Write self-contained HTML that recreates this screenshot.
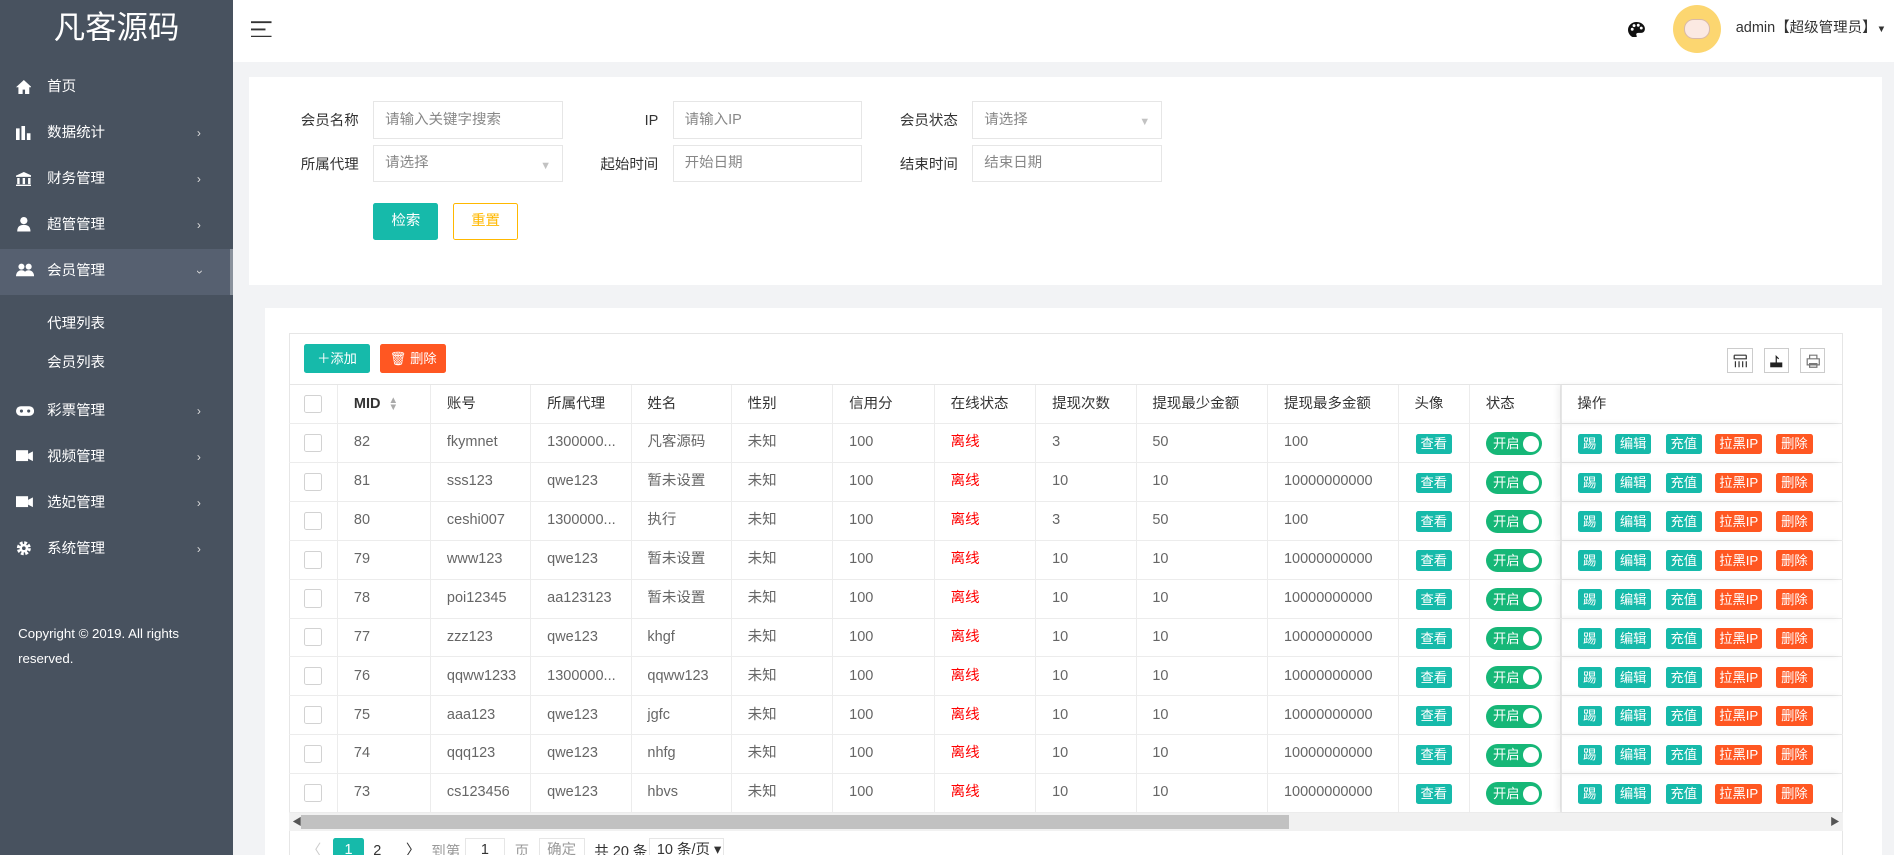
<!DOCTYPE html>
<html><head><meta charset="utf-8"><style>
html{zoom:1.20791;overflow:hidden}
*{box-sizing:border-box;margin:0;padding:0}
body{width:1568px;height:708px;overflow:hidden;background:#f2f3f5;font-family:"Liberation Sans","Noto Sans CJK SC",sans-serif;font-size:12px;color:#666;position:relative;line-height:16px}
.a{position:absolute}
#side{left:0;top:0;width:193px;height:708px;background:#48525f;color:#fff}
.logo{left:0;width:193px;top:4px;text-align:center;font-size:26px;color:#fff;line-height:38px}
.mi{left:0;width:190px;height:38px;line-height:38px;font-size:12px;color:#fff}
.mi .t{position:absolute;left:39px}
.mi .ar{position:absolute;left:163px;font-size:10px;color:#ddd}
.mi .ic{position:absolute;left:13px;top:12px;width:13px;height:12px}
.sub{left:39px;font-size:12px;color:#fff}
#top{left:193px;top:0;width:1375px;height:51px;background:#fff}
.card{background:#fff}
.lab{font-size:12px;color:#333;text-align:right;width:80px}
.inp{height:31px;border:1px solid #e6e6e6;background:#fff;color:#888;padding-left:9px;display:flex;align-items:center;font-size:12px;width:157px}
.row{position:absolute;left:239px;width:1287px;height:32.3px;border-bottom:1px solid #ececec}
.c{position:absolute;top:0;height:100%;display:flex;align-items:center;padding-left:13px;border-right:1px solid #ececec;white-space:nowrap;overflow:hidden;line-height:16px}
.c span,.c b{line-height:16px}
.btn{display:flex;align-items:center;justify-content:center;height:17px;color:#fff;font-size:11px;border-radius:2px;position:absolute}
.g{background:#16baaa}.o{background:#ff5722}
.sw{position:absolute;left:1230px;width:47px;height:19px;border-radius:10px;background:#16b777;color:#fff;font-size:11px;display:flex;align-items:center;padding-left:6px}
.sw::after{content:"";position:absolute;right:3px;top:3px;width:13px;height:13px;border-radius:50%;background:#fff}
.cb{width:15px;height:15px;border:1px solid #d2d2d2;background:#fff;border-radius:2px}
.ctr{display:flex;align-items:center;justify-content:center}
</style></head><body>
<div id="side" class="a">
<div class="a logo">凡客源码</div>
<div class="a mi" style="top:54px"><svg class="ic" viewBox="0 0 13 12"><path d="M6.5 0L0 6h2v6h3.5V8h2v4H11V6h2z" fill="#fff"/></svg><span class="t">首页</span></div>
<div class="a mi" style="top:92px"><svg class="ic" viewBox="0 0 13 12"><path d="M0 2h3v10H0zM4.5 0h3v12h-3zM9 6h3v6H9z" fill="#fff"/></svg><span class="t">数据统计</span><span class="ar">›</span></div>
<div class="a mi" style="top:130px"><svg class="ic" viewBox="0 0 13 12"><path d="M6.5 0L0 3v1h13V3zM1 5h2v5H1zM5.5 5h2v5h-2zM10 5h2v5h-2zM0 10.5h13V12H0z" fill="#fff"/></svg><span class="t">财务管理</span><span class="ar">›</span></div>
<div class="a mi" style="top:168px"><svg class="ic" viewBox="0 0 13 12"><circle cx="6.5" cy="3" r="3" fill="#fff"/><path d="M1 12c0-4 2-5.5 5.5-5.5S12 8 12 12z" fill="#fff"/></svg><span class="t">超管管理</span><span class="ar">›</span></div>
<div class="a mi" style="top:206px;background:#566070;width:193px;border-right:3px solid #8a929c"><svg class="ic" viewBox="0 0 15 12" style="width:15px"><circle cx="4.5" cy="3" r="2.5" fill="#fff"/><circle cx="10.5" cy="3" r="2.5" fill="#fff"/><path d="M0 11c0-3 2-5 4.5-5s4.5 2 4.5 5zM6 11c0-3 2-5 4.5-5S15 8 15 11z" fill="#fff"/></svg><span class="t">会员管理</span><span class="ar" style="transform:rotate(90deg)">›</span></div>
<div class="a sub" style="top:261px">代理列表</div>
<div class="a sub" style="top:293px">会员列表</div>
<div class="a mi" style="top:322px"><svg class="ic" viewBox="0 0 15 10" style="width:15px;top:13px"><rect width="15" height="8" rx="4" fill="#fff"/><circle cx="4.5" cy="4" r="1.3" fill="#48525f"/><circle cx="10.5" cy="4" r="1.3" fill="#48525f"/></svg><span class="t">彩票管理</span><span class="ar">›</span></div>
<div class="a mi" style="top:360px"><svg class="ic" viewBox="0 0 14 10" style="width:14px"><rect width="10" height="9" fill="#fff"/><path d="M10 3l4-2v8l-4-2z" fill="#fff"/></svg><span class="t">视频管理</span><span class="ar">›</span></div>
<div class="a mi" style="top:398px"><svg class="ic" viewBox="0 0 14 10" style="width:14px"><rect width="10" height="9" fill="#fff"/><path d="M10 3l4-2v8l-4-2z" fill="#fff"/></svg><span class="t">选妃管理</span><span class="ar">›</span></div>
<div class="a mi" style="top:436px"><svg class="ic" viewBox="0 0 12 12"><circle cx="6" cy="6" r="4.3" fill="none" stroke="#fff" stroke-width="3" stroke-dasharray="2.2 1.2"/><circle cx="6" cy="6" r="3.5" fill="#fff"/><circle cx="6" cy="6" r="1.5" fill="#48525f"/></svg><span class="t">系统管理</span><span class="ar">›</span></div>
<div class="a" style="left:15px;top:514px;width:170px;font-size:11px;line-height:21px;color:#fff">Copyright © 2019. All rights reserved.</div>
</div>

<div id="top" class="a">
<svg class="a" style="left:15px;top:17px" width="18" height="14" viewBox="0 0 18 14"><path d="M0 1h17M0 7h12M0 13h17" stroke="#333" stroke-width="1.6"/></svg>
<svg class="a" style="left:1155px;top:18px" width="14" height="13" viewBox="0 0 14 13"><path d="M7 0C3 0 0 3 0 6.5S3 13 6 13c1.2 0 1.5-1 1-2s0-2 1.5-2H11c2 0 3-1.5 3-3.5C14 2.5 11 0 7 0z" fill="#111"/><circle cx="3.5" cy="6" r="1.2" fill="#fff"/><circle cx="5" cy="3" r="1.2" fill="#fff"/><circle cx="8.5" cy="2.7" r="1.2" fill="#fff"/><circle cx="11" cy="5" r="1.2" fill="#fff"/></svg>
<div class="a" style="left:1192px;top:4px;width:40px;height:40px;border-radius:50%;background:#fcd670"><div class="a" style="left:9px;top:12px;width:22px;height:16px;background:#fbe9e2;border-radius:8px;border:1px solid #d9b9a8"></div></div>
<div class="a" style="left:1244px;top:16px;font-size:12px;color:#333">admin【超级管理员】<span style="font-size:8px">▼</span></div>
</div>

<div class="a card" style="left:206px;top:64px;width:1352px;height:172px">
<div class="a lab" style="left:11px;top:29px">会员名称</div><div class="a inp" style="left:103px;top:20px">请输入关键字搜索</div>
<div class="a lab" style="left:259px;top:29px">IP</div><div class="a inp" style="left:351px;top:20px">请输入IP</div>
<div class="a lab" style="left:507px;top:29px">会员状态</div><div class="a inp" style="left:599px;top:20px">请选择<span class="a" style="right:9px;top:9px;color:#c2c2c2;font-size:9px">▼</span></div>
<div class="a lab" style="left:11px;top:65px">所属代理</div><div class="a inp" style="left:103px;top:56px">请选择<span class="a" style="right:9px;top:9px;color:#c2c2c2;font-size:9px">▼</span></div>
<div class="a lab" style="left:259px;top:65px">起始时间</div><div class="a inp" style="left:351px;top:56px">开始日期</div>
<div class="a lab" style="left:507px;top:65px">结束时间</div><div class="a inp" style="left:599px;top:56px">结束日期</div>
<div class="a ctr" style="left:103px;top:104px;width:54px;height:31px;background:#16baaa;color:#fff;border-radius:2px">检索</div>
<div class="a ctr" style="left:169px;top:104px;width:54px;height:31px;border:1px solid #ffb800;color:#ffb800;border-radius:2px">重置</div>
</div>

<div class="a card" style="left:219px;top:255px;width:1339px;height:460px"></div>
<div class="a" style="left:239px;top:276px;width:1287px;height:440px;border:1px solid #e6e6e6;background:#fff"></div>
<div class="a ctr" style="left:252px;top:285px;width:54px;height:24px;background:#16baaa;color:#fff;font-size:11px;border-radius:2px">＋添加</div>
<div class="a ctr" style="left:315px;top:285px;width:54px;height:24px;background:#ff5722;color:#fff;font-size:11px;border-radius:2px">🗑 删除</div>
<div class="a" style="left:1430px;top:288px;width:21px;height:21px;border:1px solid #ccc"><svg class="a" style="left:4px;top:4px" width="12" height="12"><path d="M1 1h10M1 1v3h10V1M2 6v5M5 6v5M8 6v5M11 6v5" stroke="#333" fill="none"/></svg></div>
<div class="a" style="left:1460px;top:288px;width:21px;height:21px;border:1px solid #ccc"><svg class="a" style="left:4px;top:4px" width="12" height="12"><path d="M1 7h10v4H1z" fill="#222"/><path d="M6 7V2l2 2" stroke="#222" fill="none"/></svg></div>
<div class="a" style="left:1490px;top:288px;width:21px;height:21px;border:1px solid #ccc"><svg class="a" style="left:4px;top:4px" width="12" height="12"><path d="M3 4V1h6v3M1 4h10v5H1zM3 8h6v3H3z" stroke="#777" fill="#fff"/></svg></div>

<div class="a" style="left:239px;top:318px;width:1287px;height:1px;background:#e6e6e6"></div>
<div id="rows"></div>
<div class="a" style="left:239px;top:673px;width:1287px;height:15px;background:#f1f1f1"><div class="a" style="left:10px;top:2px;width:818px;height:11px;background:#c1c1c1"></div><span class="a" style="left:3px;top:0px;font-size:8px;color:#555">◀</span><span class="a" style="right:3px;top:0px;font-size:8px;color:#555">▶</span></div>
<div class="a" style="left:254px;top:697px;font-size:12px;color:#ccc">〈</div>
<div class="a ctr" style="left:276px;top:694px;width:25px;height:20px;background:#16baaa;color:#fff;border-radius:2px">1</div>
<div class="a" style="left:309px;top:697px;color:#333">2</div>
<div class="a" style="left:336px;top:697px;color:#333">〉</div>
<div class="a" style="left:357px;top:698px;color:#999">到第</div>
<div class="a ctr" style="left:385px;top:694px;width:33px;height:20px;border:1px solid #e6e6e6;color:#333">1</div>
<div class="a" style="left:426px;top:698px;color:#999">页</div>
<div class="a ctr" style="left:446px;top:694px;width:38px;height:20px;border:1px solid #e6e6e6;color:#999">确定</div>
<div class="a" style="left:492px;top:698px;color:#333">共 20 条</div>
<div class="a" style="left:537px;top:694px;width:62px;height:20px;border:1px solid #e6e6e6;padding-left:6px;color:#333;display:flex;align-items:center">10 条/页 ▾</div>

<script>
(function(){
var cols=[[0,41],[41,77],[118,83],[201,83],[284,83],[367,84],[451,84],[535,84],[619,83],[702,109],[811,108],[919,59],[978,75],[1053,234]];
var head=['','MID','账号','所属代理','姓名','性别','信用分','在线状态','提现次数','提现最少金额','提现最多金额','头像','状态','操作'];
var data=[[82,'fkymnet','1300000...','凡客源码',3,50,100],[81,'sss123','qwe123','暂未设置',10,10,'10000000000'],[80,'ceshi007','1300000...','执行',3,50,100],[79,'www123','qwe123','暂未设置',10,10,'10000000000'],[78,'poi12345','aa123123','暂未设置',10,10,'10000000000'],[77,'zzz123','qwe123','khgf',10,10,'10000000000'],[76,'qqww1233','1300000...','qqww123',10,10,'10000000000'],[75,'aaa123','qwe123','jgfc',10,10,'10000000000'],[74,'qqq123','qwe123','nhfg',10,10,'10000000000'],[73,'cs123456','qwe123','hbvs',10,10,'10000000000']];
var h='';
function row(yy,vals,hd){var s='<div class="row" style="top:'+yy+'px">';for(var i=0;i<cols.length;i++){var st='left:'+cols[i][0]+'px;width:'+cols[i][1]+'px;';if(i==13)st+='border-right:0;border-left:1px solid #e6e6e6;box-shadow:-3px 0 5px rgba(0,0,0,.06);';s+='<div class="c" style="'+st+(hd?'color:#333;':'')+'"><span>'+vals[i]+'</span></div>';}return s+'</div>';}
var hv=head.slice();hv[0]='<div class="cb"></div>';hv[1]='<b>MID</b>&nbsp;&nbsp;<span style="color:#aaa;font-size:8px;line-height:6px;display:inline-block;vertical-align:middle">▲<br>▼</span>';
h+=row(319,hv,1);
for(var r=0;r<10;r++){var d=data[r];var yy=(351+r*32.2).toFixed(1);var ny=+yy;
var v=['<div class="cb"></div>',d[0],d[1],d[2],d[3],'未知',100,'<span style="color:#f00">离线</span>',d[4],d[5],d[6],'','',''];
h+=row(yy,v,0);
var y=(ny+8).toFixed(1);
h+='<div class="btn g" style="left:1172px;top:'+y+'px;width:30px">查看</div>';
h+='<div class="sw" style="top:'+(ny+7).toFixed(1)+'px">开启</div>';
h+='<div class="btn g" style="left:1306px;top:'+y+'px;width:20px">踢</div>';
h+='<div class="btn g" style="left:1337px;top:'+y+'px;width:30px">编辑</div>';
h+='<div class="btn g" style="left:1379px;top:'+y+'px;width:30px">充值</div>';
h+='<div class="btn o" style="left:1420px;top:'+y+'px;width:39px">拉黑IP</div>';
h+='<div class="btn o" style="left:1470px;top:'+y+'px;width:31px">删除</div>';}
document.getElementById('rows').innerHTML=h;
})();
</script>
</body></html>
